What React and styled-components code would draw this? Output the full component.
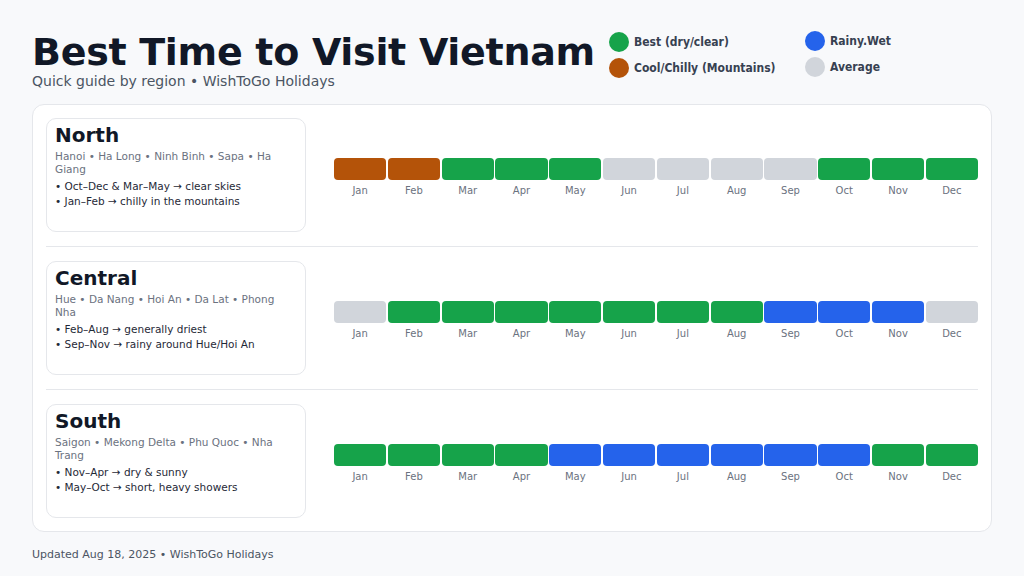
import React from 'react';
import styled, { createGlobalStyle } from 'styled-components';

const Global = createGlobalStyle`
  body { margin: 0; background: #f8f9fb; font-family: "DejaVu Sans", sans-serif; color: #111827; }
`;

const COLORS = { G: '#16a34a', C: '#b45309', R: '#2563eb', A: '#d1d5db' };
const MONTHS = ['Jan','Feb','Mar','Apr','May','Jun','Jul','Aug','Sep','Oct','Nov','Dec'];

const regions = [
  { name: 'North', places: 'Hanoi • Ha Long • Ninh Binh • Sapa • Ha Giang',
    notes: ['Oct–Dec & Mar–May → clear skies', 'Jan–Feb → chilly in the mountains'],
    months: 'CCGGGAAAAGGG' },
  { name: 'Central', places: 'Hue • Da Nang • Hoi An • Da Lat • Phong Nha',
    notes: ['Feb–Aug → generally driest', 'Sep–Nov → rainy around Hue/Hoi An'],
    months: 'AGGGGGGGRRRA' },
  { name: 'South', places: 'Saigon • Mekong Delta • Phu Quoc • Nha Trang',
    notes: ['Nov–Apr → dry & sunny', 'May–Oct → short, heavy showers'],
    months: 'GGGGRRRRRRGG' },
];

const Page = styled.div`
  width: 1024px; height: 576px; box-sizing: border-box;
  padding: 28px 32px 0;
  display: flex; flex-direction: column;
`;
const Header = styled.header`
  display: flex; align-items: flex-start; height: 76px;
`;
const TitleBlock = styled.div` width: 577px; `;
const Title = styled.h1`
  margin: 0; font-size: 38px; line-height: 48px; font-weight: 700; color: #111827; letter-spacing: -0.3px;
`;
const Subtitle = styled.div` font-size: 14px; color: #4b5563; margin-top: -3px; `;
const Legend = styled.div`
  display: grid; grid-template-columns: 196px auto; row-gap: 6px; padding-top: 4px;
`;
const LegendItem = styled.div`
  display: flex; align-items: center; gap: 5px;
  font-size: 12px; font-weight: 600; color: #374151; font-stretch: condensed;
  margin-top: ${p => p.$up ? '-3px' : '0'};
`;
const Dot = styled.span`
  width: 20px; height: 20px; border-radius: 50%; background: ${p => p.$c};
`;
const Panel = styled.main`
  background: #fff; border: 1px solid #e5e7eb; border-radius: 12px;
  height: 428px; box-sizing: border-box; padding: 13px 13px;
  display: flex; flex-direction: column;
`;
const Row = styled.section`
  display: flex; align-items: center; gap: 28px; height: 114px;
  & + & { border-top: 1px solid #e5e7eb; margin-top: 14px; padding-top: 14px; }
`;
const Card = styled.div`
  width: 260px; height: 114px; box-sizing: border-box;
  border: 1px solid #e5e7eb; border-radius: 10px; padding: 5px 8px;
`;
const RegionName = styled.h2` margin: 0; font-size: 20px; line-height: 22px; font-weight: 700; `;
const Places = styled.div` font-size: 10.5px; color: #6b7280; line-height: 13px; margin-top: 4px; `;
const Notes = styled.ul` list-style: none; margin: 3px 0 0; padding: 0; font-size: 10.5px; line-height: 14.5px; color: #1f2937; `;
const Months = styled.div`
  flex: 1; display: grid; grid-template-columns: repeat(12, 1fr); column-gap: 1.5px; margin-top: 4px;
`;
const Cell = styled.div` display: flex; flex-direction: column; align-items: center; `;
const Bar = styled.div` width: 100%; height: 22px; border-radius: 4px; background: ${p => p.$c}; `;
const MonthLabel = styled.div` font-size: 10px; color: #6b7280; margin-top: 5px; `;
const Footer = styled.footer` font-size: 11px; color: #4b5563; margin-top: 16px; `;

export default function App() {
  return (
    <Page>
      <Global />
      <Header>
        <TitleBlock>
          <Title>Best Time to Visit Vietnam</Title>
          <Subtitle>Quick guide by region • WishToGo Holidays</Subtitle>
        </TitleBlock>
        <Legend>
          <LegendItem><Dot $c={COLORS.G} />Best (dry/clear)</LegendItem>
          <LegendItem $up><Dot $c={COLORS.R} />Rainy.Wet</LegendItem>
          <LegendItem><Dot $c={COLORS.C} />Cool/Chilly (Mountains)</LegendItem>
          <LegendItem $up><Dot $c={COLORS.A} />Average</LegendItem>
        </Legend>
      </Header>
      <Panel>
        {regions.map(r => (
          <Row key={r.name}>
            <Card>
              <RegionName>{r.name}</RegionName>
              <Places>{r.places}</Places>
              <Notes>{r.notes.map(n => <li key={n}>• {n}</li>)}</Notes>
            </Card>
            <Months>
              {MONTHS.map((m, i) => (
                <Cell key={m}>
                  <Bar $c={COLORS[r.months[i]]} />
                  <MonthLabel>{m}</MonthLabel>
                </Cell>
              ))}
            </Months>
          </Row>
        ))}
      </Panel>
      <Footer>Updated Aug 18, 2025 • WishToGo Holidays</Footer>
    </Page>
  );
}
